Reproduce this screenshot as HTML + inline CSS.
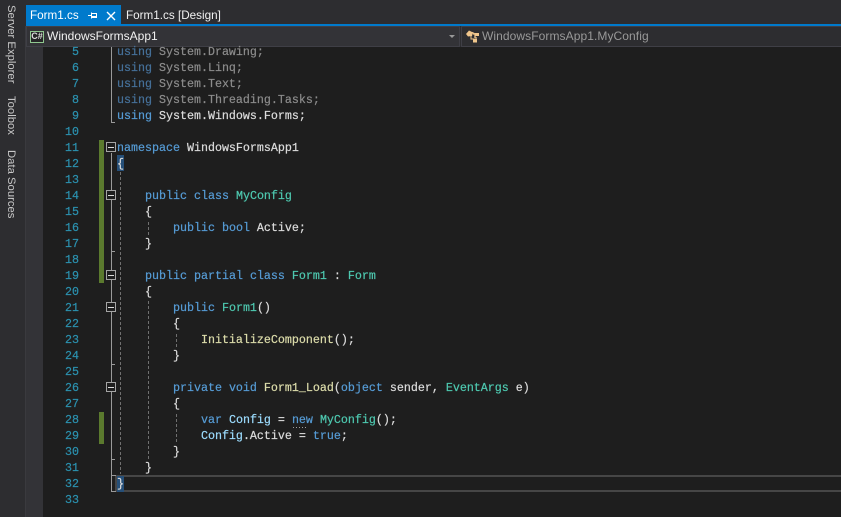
<!DOCTYPE html>
<html><head><meta charset="utf-8"><style>
html,body{margin:0;padding:0;width:841px;height:517px;overflow:hidden;background:#1e1e1e}
.a{position:absolute}
#code div{position:absolute;left:117px;height:16px;white-space:pre;font:11.67px/16px "Liberation Mono",monospace;color:#dcdcdc;-webkit-text-stroke:.2px}
#num div{position:absolute;left:50px;width:29px;text-align:right;font:11.67px/16px "Liberation Mono",monospace;color:#2b91af;-webkit-text-stroke:.2px}
.k{color:#569cd6}.d{color:#46719a}.e{color:#8c8c8c}.c{color:#4ec9b0}.m{color:#dcdcaa}.v{color:#9cdcfe}
.ui{font-family:"Liberation Sans",sans-serif;font-size:11.7px;white-space:pre}
.v-t{position:absolute;left:4px;writing-mode:vertical-rl;font:11.3px/14px "Liberation Sans",sans-serif;color:#c8c8c8;white-space:pre}
</style></head><body>
<div class="a" style="left:0;top:0;width:26px;height:517px;background:#2d2d30"></div>
<div class="a" style="left:26px;top:0;width:17px;height:517px;background:#333337"></div>
<div class="a" style="left:25px;top:26px;width:1px;height:491px;background:#3a3a3e"></div>
<div class="a" style="left:26px;top:0;width:815px;height:24px;background:#2d2d30"></div>
<div class="a" style="left:26px;top:24px;width:815px;height:2px;background:#007acc"></div>
<div class="a" style="left:26px;top:5px;width:95px;height:20px;background:#007acc"></div>
<div class="a ui" style="left:30px;top:8px;color:#fff;line-height:15px">Form1.cs</div>
<svg class="a" style="left:86px;top:10px" width="32" height="12" viewBox="0 0 32 12" fill="none" stroke="#fff">
<path d="M2 5.500H5.500M5.500 2.500v6M5.500 3.500h5v4h-5zM5.500 6.500h5"/>
<path d="M21 2l8 8M29 2l-8 8" stroke-width="1.400"/></svg>
<div class="a ui" style="left:126px;top:8px;color:#f1f1f1;line-height:15px">Form1.cs [Design]</div>

<div class="a" style="left:26px;top:26px;width:815px;height:21px;background:#2d2d30"></div>
<div class="a" style="left:26px;top:26px;height:19px;border:1px solid #3f3f46;width:432px;background:#333337"></div>
<div class="a" style="left:461px;top:26px;width:380px;height:19px;border:1px solid #3f3f46;border-right:0;background:#2d2d30"></div>
<div class="a" style="left:30px;top:31px;width:12px;height:10px;border:1px solid #8fc78f;background:#252526"></div>
<div class="a ui" style="left:30px;top:30px;width:14px;text-align:center;color:#dcdcdc;font-size:9px;line-height:13px;font-weight:bold">C#</div>
<div class="a ui" style="left:47px;top:29px;color:#f1f1f1;line-height:15px;font-size:12px">WindowsFormsApp1</div>
<div class="a" style="left:449px;top:35px;width:0;height:0;border-left:3px solid transparent;border-right:3px solid transparent;border-top:3px solid #999"></div>
<svg class="a" style="left:465px;top:29px" width="15" height="15" viewBox="0 0 15 15">
<path d="M1 5L4 1.500L8 3.500L7 7L3 7.500z" fill="#f0c68c"/><path d="M8 5h2v4h2M7 3.500L10 5" stroke="#f0c68c" stroke-width="1.300" fill="none"/>
<path d="M10 4h4v3h-4zM8 10h4v3.500H8z" fill="#f0c68c"/><path d="M6 7v3h3" stroke="#f0c68c" fill="none"/></svg>
<div class="a ui" style="left:482px;top:29px;color:#999;line-height:15px;font-size:12px;letter-spacing:.08px">WindowsFormsApp1.MyConfig</div>

<div class="v-t" style="top:5px">Server Explorer</div>
<div class="v-t" style="top:96px">Toolbox</div>
<div class="v-t" style="top:150px">Data Sources</div>

<svg class="a" style="left:0;top:0" width="841" height="517" fill="none">
<rect x="99" y="140" width="5" height="143" fill="#5b7a2e"/>
<rect x="99" y="412" width="5" height="32" fill="#5b7a2e"/>
<rect x="116" y="476" width="735" height="15" fill="none" stroke="#464646" stroke-width="2"/>
<rect x="117" y="155" width="7" height="16" fill="#264f78"/>
<rect x="117" y="476" width="7" height="16" fill="#264f78"/>
<g stroke="#9a9a9a">
<path d="M111.500 47V122.500H115M111.500 153V491.500H116M111.500 251.500H115M111.500 364.500H115M111.500 459.500H115M111.500 475.500H116"/>
</g>
<g stroke="#707070" stroke-dasharray="3 2">
<path d="M120.500 172V474M148.500 222V236M148.500 301V460M176.500 334V348M176.500 414V444"/>
</g>
<g fill="#1e1e1e" stroke="#a5a5a5">
<rect x="106.500" y="142.500" width="9" height="9"/><rect x="106.500" y="190.500" width="9" height="9"/>
<rect x="106.500" y="270.500" width="9" height="9"/><rect x="106.500" y="302.500" width="9" height="9"/>
<rect x="106.500" y="382.500" width="9" height="9"/>
</g>
<path d="M108 147.500h6M108 195.500h6M108 275.500h6M108 307.500h6M108 387.500h6" stroke="#dcdcdc"/>
<path d="M293 427.500h14" stroke="#a0a0a0" stroke-dasharray="1 2"/>
</svg>

<div id="num">
<div style="top:44px">5</div><div style="top:60px">6</div><div style="top:76px">7</div><div style="top:92px">8</div><div style="top:108px">9</div><div style="top:124px">10</div><div style="top:140px">11</div><div style="top:156px">12</div><div style="top:172px">13</div><div style="top:188px">14</div><div style="top:204px">15</div><div style="top:220px">16</div><div style="top:236px">17</div><div style="top:252px">18</div><div style="top:268px">19</div><div style="top:284px">20</div><div style="top:300px">21</div><div style="top:316px">22</div><div style="top:332px">23</div><div style="top:348px">24</div><div style="top:364px">25</div><div style="top:380px">26</div><div style="top:396px">27</div><div style="top:412px">28</div><div style="top:428px">29</div><div style="top:444px">30</div><div style="top:460px">31</div><div style="top:476px">32</div><div style="top:492px">33</div>
</div>
<div id="code">
<div style="top:44px"><span class="d">using</span> <span class="e">System.Drawing;</span></div>
<div style="top:60px"><span class="d">using</span> <span class="e">System.Linq;</span></div>
<div style="top:76px"><span class="d">using</span> <span class="e">System.Text;</span></div>
<div style="top:92px"><span class="d">using</span> <span class="e">System.Threading.Tasks;</span></div>
<div style="top:108px"><span class="k">using</span> System.Windows.Forms;</div>
<div style="top:140px"><span class="k">namespace</span> WindowsFormsApp1</div>
<div style="top:156px">{</div>
<div style="top:188px">    <span class="k">public</span> <span class="k">class</span> <span class="c">MyConfig</span></div>
<div style="top:204px">    {</div>
<div style="top:220px">        <span class="k">public</span> <span class="k">bool</span> Active;</div>
<div style="top:236px">    }</div>
<div style="top:268px">    <span class="k">public</span> <span class="k">partial</span> <span class="k">class</span> <span class="c">Form1</span> : <span class="c">Form</span></div>
<div style="top:284px">    {</div>
<div style="top:300px">        <span class="k">public</span> <span class="c">Form1</span>()</div>
<div style="top:316px">        {</div>
<div style="top:332px">            <span class="m">InitializeComponent</span>();</div>
<div style="top:348px">        }</div>
<div style="top:380px">        <span class="k">private</span> <span class="k">void</span> <span class="m">Form1_Load</span>(<span class="k">object</span> sender, <span class="c">EventArgs</span> e)</div>
<div style="top:396px">        {</div>
<div style="top:412px">            <span class="k">var</span> <span class="v">Config</span> = <span class="k">new</span> <span class="c">MyConfig</span>();</div>
<div style="top:428px">            <span class="v">Config</span>.Active = <span class="k">true</span>;</div>
<div style="top:444px">        }</div>
<div style="top:460px">    }</div>
<div style="top:476px">}</div>
</div>
</body></html>
